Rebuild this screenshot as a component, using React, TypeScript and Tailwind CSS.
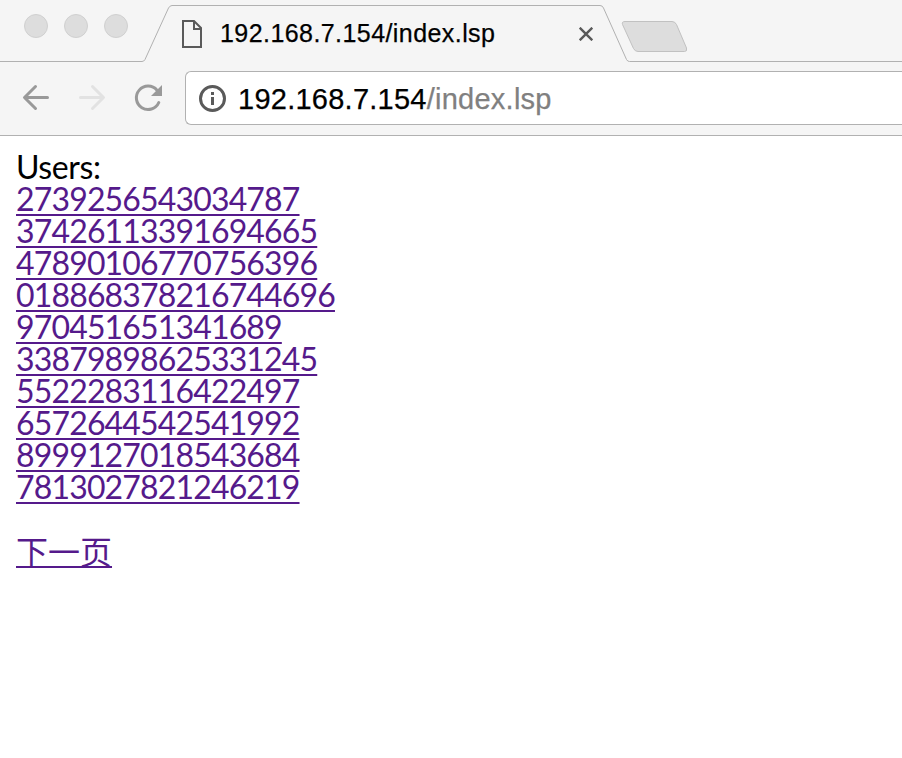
const users = [
  "2739256543034787",
  "37426113391694665",
  "47890106770756396",
  "018868378216744696",
  "970451651341689",
  "33879898625331245",
  "5522283116422497",
  "6572644542541992",
  "8999127018543684",
  "7813027821246219",
];

function WindowButtons() {
  return (
    <div className="flex gap-4 pl-6 pt-3.5">
      {[0, 1, 2].map((n) => (
        <span key={n} className="size-6 rounded-full border border-[#d0d0d0] bg-[#dddddd]" />
      ))}
    </div>
  );
}

function TabStrip() {
  return (
    <div className="relative flex h-[62px] items-start">
      <svg className="absolute inset-0" width="902" height="62" fill="none" stroke="#b1b1b1">
        <path d="M0 61.5H142Q144 61.5 145 59.5L168.5 8Q170 5.5 172 5.5H600Q602.5 5.5 603.5 8L626.5 59.5Q627.5 61.5 629.5 61.5H902" />
        <path
          d="M625 21.5H672Q675 21.5 676.5 24.5L686.5 48Q687.5 51.5 684.5 51.5H638Q635 51.5 633.5 48.5L622.5 24.5Q621.5 21.5 625 21.5Z"
          fill="#dddddd"
          stroke="#c1c1c1"
        />
      </svg>
      <WindowButtons />
      <div className="relative ml-[53px] flex h-[62px] w-[412px] items-start">
        <svg className="mt-5 shrink-0" width="21" height="28" fill="none" stroke="#5a5a5a" strokeWidth="2">
          <path d="M2 1H13L20 8V27H2Z" />
          <path d="M13 1V9H20" />
        </svg>
        <span className="ml-[18px] mt-[17px] whitespace-nowrap font-['Liberation_Sans',sans-serif] text-[25px] leading-8 tracking-[0.43px] text-black [-webkit-text-stroke:0.25px]">
          192.168.7.154/index.lsp
        </span>
        <svg className="ml-auto mt-[27px] shrink-0" width="14" height="14" fill="none" stroke="#5a5a5a" strokeWidth="2.4">
          <path d="M.7.7 13.3 13.3M13.3.7.7 13.3" />
        </svg>
      </div>
    </div>
  );
}

function Toolbar() {
  return (
    <div className="flex h-[74px] border-b border-[#b1b1b1] pt-[9px]">
      <div className="flex w-[185px] shrink-0 pl-[22px] pt-[12px]">
        <svg width="28" height="30" fill="none" stroke="#999999" strokeWidth="3" strokeLinecap="round" strokeLinejoin="round">
          <path d="M25.5 14.5H3M13.5 3.5 2.5 14.5 13.5 25.5" />
        </svg>
        <svg className="ml-7" width="28" height="30" fill="none" stroke="#e2e2e2" strokeWidth="3" strokeLinecap="round" strokeLinejoin="round">
          <path d="M2.500 14.5H25M14.5 3.5 25.5 14.5 14.5 25.5" />
        </svg>
        <svg className="ml-7" width="30" height="30" fill="none">
          <path d="M23 7.2A11.7 11.7 0 1 0 24.800 19.5" stroke="#999999" strokeWidth="3" strokeLinecap="round" />
          <path d="M28 2V13H17Z" fill="#999999" />
        </svg>
      </div>
      <div className="flex h-[54px] flex-1 items-center rounded-l-[6px] border border-r-0 border-[#b1b1b1] bg-white pl-[13px]">
        <svg className="shrink-0" width="27" height="27" fill="none">
          <circle cx="13.5" cy="13.5" r="12" stroke="#5a5a5a" strokeWidth="3" />
          <path d="M12 7H15V10H12ZM12 12H15V20H12Z" fill="#5a5a5a" />
        </svg>
        <span className="ml-3 mt-0.5 whitespace-nowrap font-['Liberation_Sans',sans-serif] text-[29px] leading-8 tracking-[0.25px] text-black [-webkit-text-stroke:0.25px]">
          192.168.7.154<span className="text-[#808080]">/index.lsp</span>
        </span>
      </div>
    </div>
  );
}

export default function App() {
  return (
    <div className="h-[758px] w-[902px] overflow-hidden bg-white">
      <header className="bg-[#f5f5f5]">
        <TabStrip />
        <Toolbar />
      </header>
      <main className="flex flex-col items-start px-4 pt-[15px] font-['Lato','Noto_Sans_CJK_SC',sans-serif] text-[32px] leading-8">
        <p className="tracking-[-0.4px] text-black">Users:</p>
        {users.map((id) => (
          <a
            key={id}
            href="#"
            className="h-8 tracking-[-0.84px] text-[#551a8b] underline decoration-2 underline-offset-[3px] [text-decoration-skip-ink:none]"
          >
            {id}
          </a>
        ))}
        <a
          href="#"
          className="mt-[31px] h-8 font-['Noto_Sans_CJK_SC',sans-serif] font-normal text-[#551a8b] underline decoration-2 underline-offset-[2px] [text-decoration-skip-ink:none]"
        >
          下一页
        </a>
      </main>
    </div>
  );
}
